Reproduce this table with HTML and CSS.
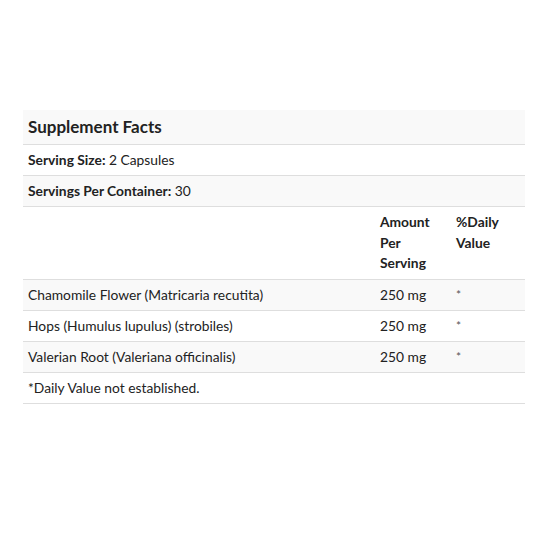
FILE: index.html
```html
<!DOCTYPE html>
<html>
<head>
<meta charset="utf-8">
<link rel="stylesheet" href="styles.css">
</head>
<body>
<div class="page">
<table class="facts">
  <colgroup><col><col class="c-amt"><col class="c-dv"></colgroup>
  <tr class="alt title-row"><th colspan="3" class="title">Supplement Facts</th></tr>
  <tr><td colspan="3"><b>Serving Size:</b> 2 Capsules</td></tr>
  <tr class="alt"><td colspan="3"><b>Servings Per Container:</b> 30</td></tr>
  <tr class="head"><th></th><th>Amount Per Serving</th><th>%Daily Value</th></tr>
  <tr class="alt"><td>Chamomile Flower (Matricaria recutita)</td><td>250 mg</td><td class="star">*</td></tr>
  <tr><td>Hops (Humulus lupulus) (strobiles)</td><td>250 mg</td><td class="star">*</td></tr>
  <tr class="alt"><td>Valerian Root (Valeriana officinalis)</td><td>250 mg</td><td class="star">*</td></tr>
  <tr><td colspan="3">*Daily Value not established.</td></tr>
</table>
</div>
</body>
</html>
```
FILE: styles.css
```css
html, body { margin: 0; padding: 0; background: #fff; }
body { font-family: Lato, "Open Sans", sans-serif; color: #222; }
.page { padding: 110px 8px 0 23px; }
.facts { width: 502px; border-collapse: collapse; font-size: 13.8px; line-height: 20px; }
.c-amt { width: 76px; }
.c-dv { width: 74px; }
.facts td, .facts th { padding: 5px 5px; border-bottom: 1px solid #dedede; text-align: left; vertical-align: top; }
.facts th { font-weight: 700; }
.alt { background: #f9f9f9; }
.title { font-size: 17px; line-height: 24px; padding: 7px 5px 4px; }
.head th { line-height: 20.5px; padding: 5px 5px 5px; }
.facts b { font-weight: 700; }
.star { font-size: 12px; color: #555; padding-top: 6px; }
```
